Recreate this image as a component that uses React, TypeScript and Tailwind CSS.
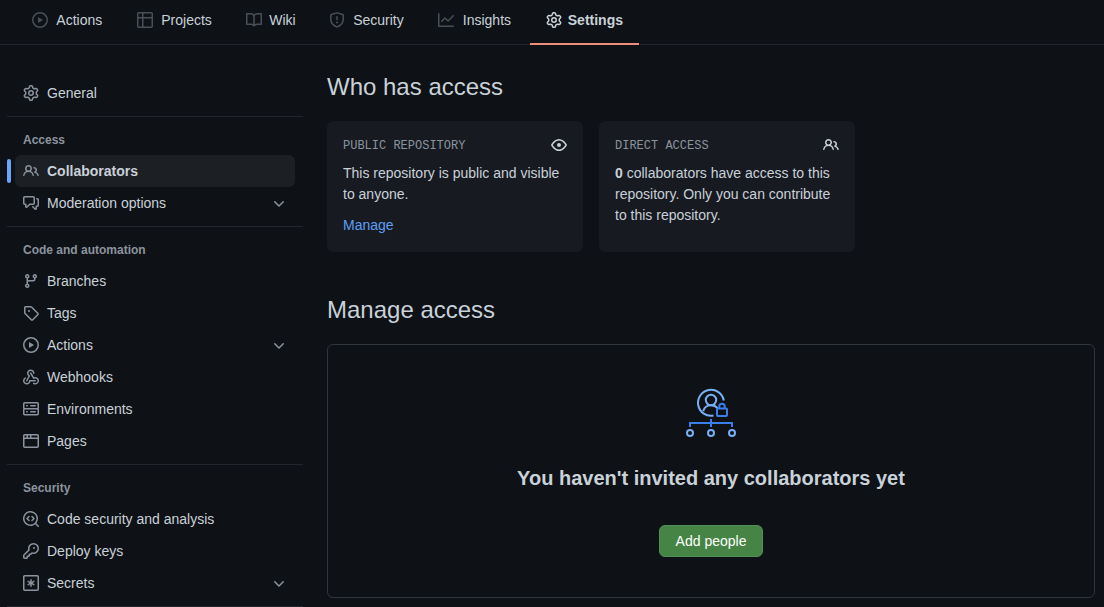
import React from "react";

const icons = {
  play: "M1.5 8a6.5 6.5 0 1113 0 6.5 6.5 0 01-13 0zM8 0a8 8 0 100 16A8 8 0 008 0zM6.379 5.227A.25.25 0 006 5.442v5.117a.25.25 0 00.379.214l4.264-2.559a.25.25 0 000-.428L6.379 5.227z",
  table: "M0 1.75C0 .784.784 0 1.75 0h12.5C15.216 0 16 .784 16 1.75v12.5A1.75 1.75 0 0114.25 16H1.75A1.75 1.75 0 010 14.25zM6.5 6.5v8h7.75a.25.25 0 00.25-.25V6.5zm8-1.5V1.75a.25.25 0 00-.25-.25H6.5V5zm-13 1.5v7.75c0 .138.112.25.25.25H5v-8zM5 5V1.5H1.75a.25.25 0 00-.25.25V5z",
  book: "M0 1.75A.75.75 0 01.75 1h4.253c1.227 0 2.317.59 3 1.501A3.744 3.744 0 0111.006 1h4.245a.75.75 0 01.75.75v10.5a.75.75 0 01-.75.75h-4.507a2.25 2.25 0 00-1.591.659l-.622.621a.75.75 0 01-1.06 0l-.622-.621A2.25 2.25 0 005.258 13H.75a.75.75 0 01-.75-.75V1.75zm8.755 3a2.25 2.25 0 012.25-2.25H14.5v9h-3.757c-.71 0-1.4.201-1.992.572l.004-7.322zm-1.504 7.324l.004-5.073-.002-2.253A2.25 2.25 0 005.003 2.5H1.5v9h3.757a3.75 3.75 0 011.994.574z",
  shield: "M7.467.133a1.75 1.75 0 011.066 0l5.25 1.68A1.75 1.75 0 0115 3.48V7c0 1.566-.32 3.182-1.303 4.682-.983 1.498-2.585 2.813-5.032 3.855a1.7 1.7 0 01-1.33 0c-2.447-1.042-4.049-2.357-5.032-3.855C1.32 10.182 1 8.566 1 7V3.48a1.755 1.755 0 011.217-1.667zm.61 1.429a.25.25 0 00-.153 0l-5.25 1.68a.25.25 0 00-.174.238V7c0 1.358.275 2.666 1.057 3.86.784 1.194 2.121 2.34 4.366 3.297a.196.196 0 00.154 0c2.245-.956 3.582-2.104 4.366-3.298C13.225 9.666 13.5 8.36 13.5 7V3.48a.251.251 0 00-.174-.237l-5.25-1.68zM8.75 4.75v3a.75.75 0 01-1.5 0v-3a.75.75 0 011.5 0zM9 10.5a1 1 0 11-2 0 1 1 0 012 0z",
  graph: "M1.5 1.75a.75.75 0 00-1.5 0v12.5c0 .414.336.75.75.75h14.5a.75.75 0 000-1.5H1.5V1.75zm14.28 2.53a.75.75 0 00-1.06-1.06L10 7.94 7.53 5.47a.75.75 0 00-1.06 0L3.22 8.72a.75.75 0 001.06 1.06L7 7.06l2.47 2.47a.75.75 0 001.06 0l5.25-5.25z",
  gear: "M8 0a8.2 8.2 0 01.701.031C9.444.095 9.99.645 10.16 1.29l.288 1.107c.018.066.079.158.212.224.231.114.454.243.668.386.123.082.233.09.299.071l1.103-.303c.644-.176 1.392.021 1.82.63.27.385.506.792.704 1.218.315.675.111 1.422-.364 1.891l-.814.806c-.049.048-.098.147-.088.294.016.257.016.515 0 .772-.01.147.038.246.088.294l.814.806c.475.469.679 1.216.364 1.891a7.977 7.977 0 01-.704 1.217c-.428.61-1.176.807-1.82.63l-1.102-.302c-.067-.019-.177-.011-.3.071a5.909 5.909 0 01-.668.386c-.133.066-.194.158-.211.224l-.29 1.106c-.168.646-.715 1.196-1.458 1.26a8.006 8.006 0 01-1.402 0c-.743-.064-1.289-.614-1.458-1.26l-.289-1.106c-.018-.066-.079-.158-.212-.224a5.738 5.738 0 01-.668-.386c-.123-.082-.233-.09-.299-.071l-1.103.303c-.644.176-1.392-.021-1.82-.63a8.12 8.12 0 01-.704-1.218c-.315-.675-.111-1.422.363-1.891l.815-.806c.05-.048.098-.147.088-.294a6.214 6.214 0 010-.772c.01-.147-.038-.246-.088-.294l-.815-.806C.635 6.045.431 5.298.746 4.623a7.92 7.92 0 01.704-1.217c.428-.61 1.176-.807 1.82-.63l1.102.302c.067.019.177.011.3-.071.214-.143.437-.272.668-.386.133-.066.194-.158.211-.224l.29-1.106C6.009.645 6.556.095 7.299.03 7.53.01 7.764 0 8 0zm-.571 1.525c-.036.003-.108.036-.137.146l-.289 1.105c-.147.561-.549.967-.998 1.189-.173.086-.34.183-.5.29-.417.278-.97.423-1.529.27l-1.103-.303c-.109-.03-.175.016-.195.045-.22.312-.412.644-.573.99-.014.031-.021.11.059.19l.815.806c.411.406.562.957.53 1.456a4.709 4.709 0 000 .582c.032.499-.119 1.05-.53 1.456l-.815.806c-.081.08-.073.159-.059.19.162.346.353.677.573.989.02.03.085.076.195.046l1.102-.303c.56-.153 1.113-.008 1.53.27.161.107.328.204.501.29.447.222.85.629.997 1.189l.289 1.105c.029.109.101.143.137.146a6.6 6.6 0 001.142 0c.036-.003.108-.036.137-.146l.289-1.105c.147-.561.549-.967.998-1.189.173-.086.34-.183.5-.29.417-.278.97-.423 1.529-.27l1.103.303c.109.029.175-.016.195-.045.22-.313.411-.644.573-.99.014-.031.021-.11-.059-.19l-.815-.806c-.411-.406-.562-.957-.53-1.456a4.709 4.709 0 000-.582c-.032-.499.119-1.05.53-1.456l.815-.806c.081-.08.073-.159.059-.19a6.464 6.464 0 00-.573-.989c-.02-.03-.085-.076-.195-.046l-1.102.303c-.56.153-1.113.008-1.53-.27a4.44 4.44 0 00-.501-.29c-.447-.222-.85-.629-.997-1.189l-.289-1.105c-.029-.11-.101-.143-.137-.146a6.6 6.6 0 00-1.142 0zM11 8a3 3 0 11-6 0 3 3 0 016 0zM9.5 8a1.5 1.5 0 10-3.001.001A1.5 1.5 0 009.5 8z",
  people: "M5.5 3.5a2 2 0 100 4 2 2 0 000-4zM2 5.5a3.5 3.5 0 115.898 2.549 5.507 5.507 0 013.034 4.084.75.75 0 11-1.482.235 4.001 4.001 0 00-7.9 0 .75.75 0 01-1.482-.236A5.507 5.507 0 013.102 8.05 3.49 3.49 0 012 5.5zM11 4a.75.75 0 100 1.5 1.5 1.5 0 01.666 2.844.75.75 0 00-.416.672v.352a.75.75 0 00.574.73c1.2.289 2.162 1.2 2.522 2.372a.75.75 0 101.434-.44 5.01 5.01 0 00-2.56-3.012A3 3 0 0011 4z",
  discussion: "M1.5 2.75a.25.25 0 01.25-.25h8.5a.25.25 0 01.25.25v5.5a.25.25 0 01-.25.25h-3.5a.75.75 0 00-.53.22L3.5 11.44V9.25a.75.75 0 00-.75-.75h-1a.25.25 0 01-.25-.25v-5.5zM1.75 1A1.75 1.75 0 000 2.75v5.5C0 9.216.784 10 1.75 10H2v1.543a1.457 1.457 0 002.487 1.03L7.061 10h3.189A1.75 1.75 0 0012 8.25v-5.5A1.75 1.75 0 0010.25 1h-8.5zM14.5 4.75a.25.25 0 00-.25-.25h-.5a.75.75 0 110-1.5h.5c.966 0 1.75.784 1.75 1.75v5.5A1.75 1.75 0 0114.25 12H14v1.543a1.457 1.457 0 01-2.487 1.03L9.22 12.28a.75.75 0 111.06-1.06l2.22 2.22v-2.19a.75.75 0 01.75-.75h1a.25.25 0 00.25-.25v-5.5z",
  branch: "M11.75 2.5a.75.75 0 100 1.5.75.75 0 000-1.5zm-2.25.75a2.25 2.25 0 113 2.122V6A2.5 2.5 0 0110 8.5H6a1 1 0 00-1 1v1.128a2.251 2.251 0 11-1.5 0V5.372a2.25 2.25 0 111.5 0v1.836A2.492 2.492 0 016 7h4a1 1 0 001-1v-.628A2.25 2.25 0 019.5 3.25zM4.25 12a.75.75 0 100 1.5.75.75 0 000-1.5zM3.5 3.25a.75.75 0 111.5 0 .75.75 0 01-1.5 0z",
  tag: "M2.5 7.775V2.75a.25.25 0 01.25-.25h5.025a.25.25 0 01.177.073l6.25 6.25a.25.25 0 010 .354l-5.025 5.025a.25.25 0 01-.354 0l-6.25-6.25a.25.25 0 01-.073-.177zm-1.5 0V2.75C1 1.784 1.784 1 2.75 1h5.025c.464 0 .91.184 1.238.513l6.25 6.25a1.75 1.75 0 010 2.474l-5.026 5.026a1.75 1.75 0 01-2.474 0l-6.25-6.25A1.75 1.75 0 011 7.775zM6 5a1 1 0 100 2 1 1 0 000-2z",
  webhook: "M5.5 4.25a2.25 2.25 0 014.5 0 .75.75 0 001.5 0 3.75 3.75 0 10-6.14 2.889l-2.272 4.258a.75.75 0 001.324.706L7 7.25a.75.75 0 00-.309-1.015A2.25 2.25 0 015.5 4.25zM7.364 3.607a.75.75 0 011.03.257l2.608 4.349a3.75 3.75 0 11-.628 6.785.75.75 0 01.752-1.299 2.25 2.25 0 10-.033-3.88.75.75 0 01-1.03-.256L7.107 4.636a.75.75 0 01.257-1.03zM2.9 8.776A.75.75 0 012.625 9.8 2.25 2.25 0 106 11.75a.75.75 0 01.75-.751h5.5a.75.75 0 010 1.5H7.425a3.751 3.751 0 11-5.55-3.998.75.75 0 011.024.274z",
  server: "M1.75 1A1.75 1.75 0 000 2.75v4c0 .372.116.717.314 1a1.742 1.742 0 00-.314 1v4c0 .966.784 1.75 1.75 1.75h12.5A1.75 1.75 0 0016 12.75v-4c0-.372-.116-.717-.314-1 .198-.283.314-.628.314-1v-4A1.75 1.75 0 0014.25 1H1.75zm0 7.5a.25.25 0 00-.25.25v4c0 .138.112.25.25.25h12.5a.25.25 0 00.25-.25v-4a.25.25 0 00-.25-.25H1.75zM1.5 2.75a.25.25 0 01.25-.25h12.5a.25.25 0 01.25.25v4a.25.25 0 01-.25.25H1.75a.25.25 0 01-.25-.25v-4zm5.5 2A.75.75 0 017.75 4h4.5a.75.75 0 010 1.5h-4.5A.75.75 0 017 4.75zM7.75 10a.75.75 0 000 1.5h4.5a.75.75 0 000-1.5h-4.5zM3 4.75A.75.75 0 013.75 4h.5a.75.75 0 010 1.5h-.5A.75.75 0 013 4.75zM3.75 10a.75.75 0 000 1.5h.5a.75.75 0 000-1.5h-.5z",
  browser: "M0 2.75C0 1.784.784 1 1.75 1h12.5c.966 0 1.75.784 1.75 1.75v10.5A1.75 1.75 0 0114.25 15H1.75A1.75 1.75 0 010 13.25V2.75zm1.75-.25a.25.25 0 00-.25.25V4.5h2v-2H1.75zM5 2.5v2h2v-2H5zm3.5 0v2h6V2.75a.25.25 0 00-.25-.25H8.5zm6 3.5h-13v7.25c0 .138.112.25.25.25h12.5a.25.25 0 00.25-.25V6z",
  codescan: "M8.47 4.97a.75.75 0 000 1.06L9.94 7.5 8.47 8.97a.75.75 0 101.06 1.06l2-2a.75.75 0 000-1.06l-2-2a.75.75 0 00-1.06 0zM6.53 6.03a.75.75 0 00-1.06-1.06l-2 2a.75.75 0 000 1.06l2 2a.75.75 0 101.06-1.06L5.06 7.5l1.47-1.47zM12.246 13.307a7.5 7.5 0 111.06-1.06l2.474 2.473a.75.75 0 11-1.06 1.06l-2.474-2.473zM1.5 7.5a6 6 0 1110.386 4.094.75.75 0 00-.292.293A6 6 0 011.5 7.5z",
  key: "M6.5 5.5a4 4 0 112.731 3.795.75.75 0 00-.768.18L7.44 10.5H6.25a.75.75 0 00-.75.75v1.19l-.06.06H4.25a.75.75 0 00-.75.75v1.19l-.06.06H1.75a.25.25 0 01-.25-.25v-1.69l5.024-5.023a.75.75 0 00.181-.768A3.995 3.995 0 016.5 5.5zm4-5.5a5.5 5.5 0 00-5.348 6.788L.22 11.72a.75.75 0 00-.22.53v2C0 15.216.784 16 1.75 16h2a.75.75 0 00.53-.22l.5-.5a.75.75 0 00.22-.53V14h.75a.75.75 0 00.53-.22l.5-.5a.75.75 0 00.22-.53V12h.75a.75.75 0 00.53-.22l.932-.932A5.5 5.5 0 1010.5 0zm.5 6a1 1 0 100-2 1 1 0 000 2z",
  asterisk: "M0 1.75C0 .784.784 0 1.75 0h12.5C15.216 0 16 .784 16 1.75v12.5A1.75 1.75 0 0114.25 16H1.75A1.75 1.75 0 010 14.25zM1.75 1.5a.25.25 0 00-.25.25v12.5c0 .138.112.25.25.25h12.5a.25.25 0 00.25-.25V1.75a.25.25 0 00-.25-.25zM8 4a.75.75 0 01.75.75v1.95l1.69-.976a.75.75 0 01.75 1.3L9.5 8l1.69.976a.75.75 0 01-.75 1.3L8.75 9.3v1.95a.75.75 0 01-1.5 0V9.3l-1.69.976a.75.75 0 01-.75-1.3L6.5 8l-1.69-.976a.75.75 0 01.75-1.3l1.69.976V4.75A.75.75 0 018 4z",
  eye: "M1.679 7.932c.412-.621 1.242-1.75 2.366-2.717C5.175 4.242 6.527 3.5 8 3.5c1.473 0 2.824.742 3.955 1.715 1.124.967 1.954 2.096 2.366 2.717a.119.119 0 010 .136c-.412.621-1.242 1.75-2.366 2.717C10.825 11.758 9.473 12.5 8 12.5c-1.473 0-2.824-.742-3.955-1.715C2.92 9.818 2.09 8.69 1.679 8.068a.119.119 0 010-.136zM8 2c-1.981 0-3.67.992-4.933 2.078C1.797 5.169.88 6.423.43 7.1a1.619 1.619 0 000 1.798c.45.678 1.367 1.932 2.637 3.024C4.329 13.008 6.019 14 8 14c1.981 0 3.67-.992 4.933-2.078 1.27-1.091 2.187-2.345 2.637-3.023a1.619 1.619 0 000-1.798c-.45-.678-1.367-1.932-2.637-3.023C11.671 2.992 9.981 2 8 2zm0 8a2 2 0 100-4 2 2 0 000 4z",
  chevron: "M12.78 6.22a.75.75 0 010 1.06l-4.25 4.25a.75.75 0 01-1.06 0L3.22 7.28a.75.75 0 011.06-1.06L8 9.94l3.72-3.72a.75.75 0 011.06 0z",
};

type IconName = keyof typeof icons;

function Icon({ name, className = "" }: { name: IconName; className?: string }) {
  return (
    <svg viewBox="0 0 16 16" className={`size-4 shrink-0 fill-current ${className}`} aria-hidden="true">
      <path fillRule="evenodd" d={icons[name]} />
    </svg>
  );
}

type Item = { icon: IconName; label: string; active?: boolean; expandable?: boolean };

const tabs: Item[] = [
  { icon: "play", label: "Actions" },
  { icon: "table", label: "Projects" },
  { icon: "book", label: "Wiki" },
  { icon: "shield", label: "Security" },
  { icon: "graph", label: "Insights" },
  { icon: "gear", label: "Settings", active: true },
];

const groups: { title?: string; items: Item[] }[] = [
  { items: [{ icon: "gear", label: "General" }] },
  {
    title: "Access",
    items: [
      { icon: "people", label: "Collaborators", active: true },
      { icon: "discussion", label: "Moderation options", expandable: true },
    ],
  },
  {
    title: "Code and automation",
    items: [
      { icon: "branch", label: "Branches" },
      { icon: "tag", label: "Tags" },
      { icon: "play", label: "Actions", expandable: true },
      { icon: "webhook", label: "Webhooks" },
      { icon: "server", label: "Environments" },
      { icon: "browser", label: "Pages" },
    ],
  },
  {
    title: "Security",
    items: [
      { icon: "codescan", label: "Code security and analysis" },
      { icon: "key", label: "Deploy keys" },
      { icon: "asterisk", label: "Secrets", expandable: true },
    ],
  },
];

function Tab({ icon, label, active }: Item) {
  return (
    <a
      className={`flex h-[45px] items-center gap-1.5 border-b-2 px-4 pb-[3px] ${
        active ? "border-[#ec8e7a]" : "border-transparent"
      }`}
    >
      <Icon name={icon} className={active ? "text-[#c9d1d9]" : "text-[#484f58]"} />
      <span
        data-label={label}
        className={`grid justify-items-center after:invisible after:h-0 after:overflow-hidden after:font-semibold after:content-[attr(data-label)] ${
          active ? "font-semibold" : ""
        }`}
      >
        {label}
      </span>
    </a>
  );
}

function NavItem({ icon, label, active, expandable }: Item) {
  return (
    <li className="flex items-center">
      <span className={`mr-1 h-6 w-1 rounded-md ${active ? "bg-[#6ca4f8]" : ""}`} />
      <a className={`flex h-8 w-[280px] items-center gap-2 rounded-md px-2 ${active ? "bg-[#1c1f24] font-semibold" : ""}`}>
        <Icon name={icon} className="text-[#8b949e]" />
        <span className="grow">{label}</span>
        {expandable && <Icon name="chevron" className="text-[#8b949e]" />}
      </a>
    </li>
  );
}

function AccessCard({ title, icon, children }: { title: string; icon: IconName; children: React.ReactNode }) {
  return (
    <div className="h-[131px] w-64 rounded-md bg-[#171a21] p-4">
      <div className="mb-2.5 flex h-4 items-center justify-between">
        <span className="pt-[3px] font-['Liberation_Mono',monospace] text-xs leading-[17px] text-[#8b949e] uppercase">{title}</span>
        <Icon name={icon} />
      </div>
      {children}
    </div>
  );
}

function BlankslateArt() {
  return (
    <svg viewBox="0 0 52 50" className="h-[50px] w-[52px]" fill="none" strokeWidth="2" aria-hidden="true">
      <g stroke="#79b0f5">
        <path d="M38.8 12.5A13 13 0 1 0 28.5 27.6" />
        <circle cx="26" cy="12" r="5.2" />
        <path d="M18.2 23.3c.8-3.6 4-6.1 7.8-6.1 2.8 0 5.2 1.2 6.5 3" />
        <circle cx="5" cy="45" r="3" />
        <circle cx="26" cy="45" r="3" />
        <circle cx="47" cy="45" r="3" />
      </g>
      <g stroke="#3b7fec">
        <rect x="32" y="20.5" width="10" height="7.5" rx="1" />
        <path d="M34.3 20v-1.5a2.7 2.7 0 0 1 5.4 0V20M26 31v8M5 39v-4h42v4" />
      </g>
    </svg>
  );
}

export default function App() {
  return (
    <div className="h-[607px] overflow-hidden bg-[#0e1116] font-['Liberation_Sans',Arial,sans-serif] text-sm text-[#c9d1d9]">
      <nav className="flex h-[45px] border-b border-[#21262d] pl-[15.6px]">
        {tabs.map((tab) => (
          <Tab key={tab.label} {...tab} />
        ))}
      </nav>

      <div className="flex gap-6 pr-[9px] pl-[7px]">
        <aside className="w-[296px] shrink-0 pt-8">
          {groups.map((group, i) => (
            <section key={i} className="border-b border-[#21262d] pb-[7px]">
              {group.title && (
                <h3 className="flex h-[38px] items-center px-4 pt-2 text-xs font-semibold text-[#8b949e]">{group.title}</h3>
              )}
              <ul>
                {group.items.map((item) => (
                  <NavItem key={item.label} {...item} />
                ))}
              </ul>
            </section>
          ))}
        </aside>

        <main className="grow pt-6">
          <h2 className="mb-4 text-2xl leading-9">Who has access</h2>
          <div className="flex gap-4">
            <AccessCard title="Public repository" icon="eye">
              <p className="leading-[21px]">This repository is public and visible to anyone.</p>
              <a className="mt-2.5 block leading-[21px] text-[#5e9ff5]">Manage</a>
            </AccessCard>
            <AccessCard title="Direct access" icon="people">
              <p className="leading-[21px]">
                <strong className="font-semibold">0</strong> collaborators have access to this repository. Only you can contribute
                to this repository.
              </p>
            </AccessCard>
          </div>

          <h2 className="mt-10 mb-4 text-2xl leading-9">Manage access</h2>
          <div className="flex h-[254px] flex-col items-center rounded-md border border-[#30363d] pt-[43px]">
            <BlankslateArt />
            <h3 className="mt-[25px] text-xl leading-[30px] font-semibold">You haven't invited any collaborators yet</h3>
            <button className="mt-8 h-8 rounded-md border border-[#52905a] bg-[#458444] px-4 text-white">Add people</button>
          </div>
        </main>
      </div>
    </div>
  );
}
